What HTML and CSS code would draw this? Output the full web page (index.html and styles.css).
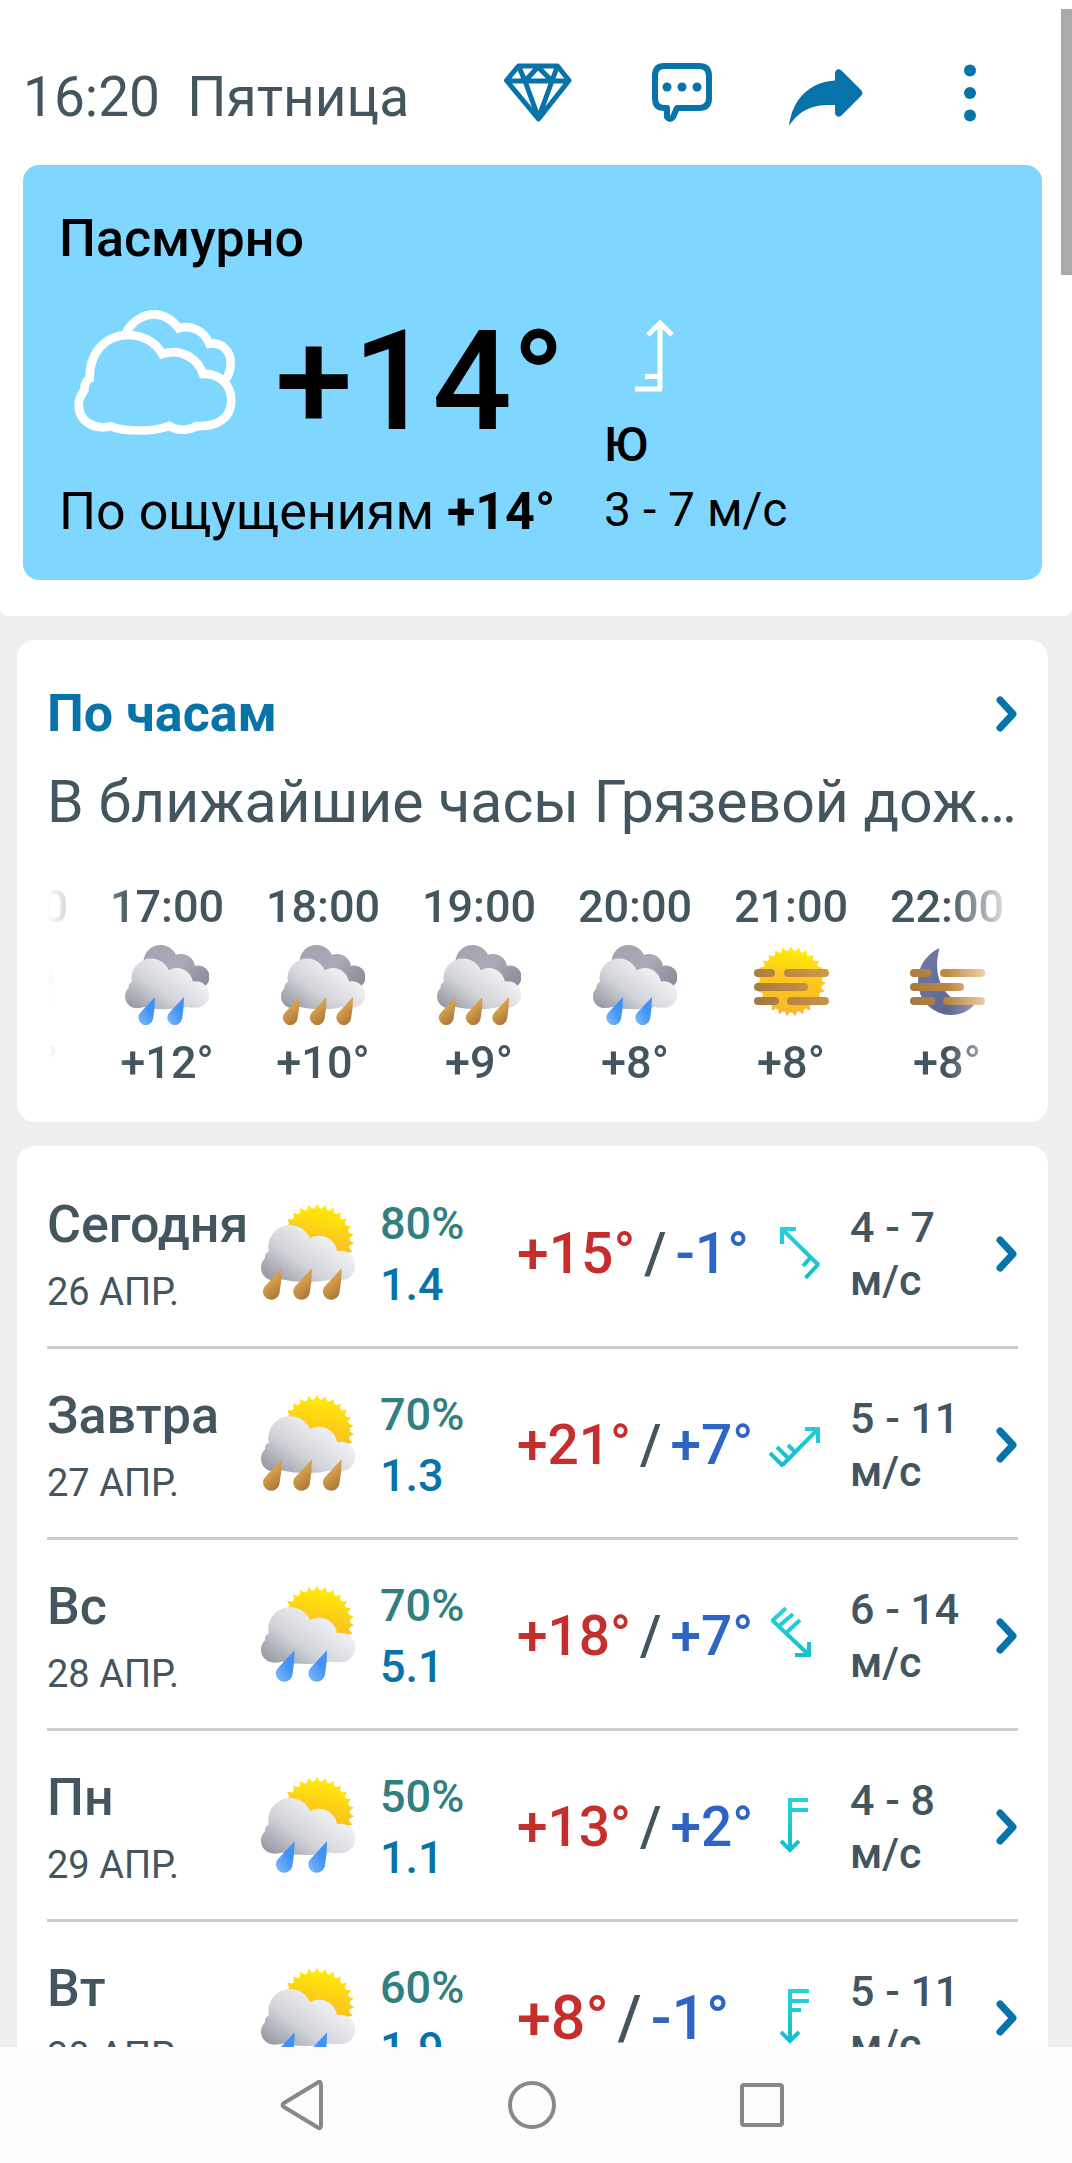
FILE: index.html
```html
<!DOCTYPE html>
<html lang="ru">
<head>
<meta charset="utf-8">
<meta name="viewport" content="width=device-width, initial-scale=1">
<title>Прогноз погоды</title>
<link rel="stylesheet" href="styles.css">
</head>
<body>
<svg class="sprite" aria-hidden="true">
  <defs>
    <linearGradient id="g-back" gradientUnits="userSpaceOnUse" x1="30" y1="0" x2="75" y2="45"><stop offset="0" stop-color="#a3a4b0"/><stop offset=".5" stop-color="#a9aab6"/><stop offset="1" stop-color="#8b8c99"/></linearGradient>
    <linearGradient id="g-front" gradientUnits="userSpaceOnUse" x1="50" y1="22" x2="16" y2="68"><stop offset="0" stop-color="#eceef1"/><stop offset=".5" stop-color="#d2d4da"/><stop offset="1" stop-color="#989aa5"/></linearGradient>
    <linearGradient id="g-drop" x1="1" y1="0" x2="0" y2="1"><stop offset=".4" stop-color="#3f93f8"/><stop offset="1" stop-color="#86baf8"/></linearGradient>
    <linearGradient id="g-mud" x1="0" y1="0" x2=".5" y2="1"><stop offset=".5" stop-color="#d69f4c"/><stop offset="1" stop-color="#ad7b3b"/></linearGradient>
    <linearGradient id="g-sun" x1=".6" y1="0" x2=".4" y2="1"><stop offset="0" stop-color="#ffee00"/><stop offset=".5" stop-color="#fcc51f"/><stop offset="1" stop-color="#f9b62e"/></linearGradient>
    <linearGradient id="g-fog" gradientUnits="userSpaceOnUse" x1="0" y1="60" x2="75" y2="20"><stop offset="0" stop-color="#a2763f"/><stop offset="1" stop-color="#d29b49"/></linearGradient>
    <linearGradient id="g-moon" x1="0" y1="0" x2="1" y2="1"><stop offset="0" stop-color="#717cab"/><stop offset="1" stop-color="#555f88"/></linearGradient>
    <linearGradient id="g-wind" gradientUnits="userSpaceOnUse" x1="0" y1="0" x2="0" y2="56"><stop offset="0" stop-color="#25d3dc"/><stop offset="1" stop-color="#14bccb"/></linearGradient>
    <clipPath id="sun-shape">
      <circle r="31"/>
      <polygon points="0,-35 30.3,17.5 -30.3,17.5"/>
      <polygon points="0,-35 30.3,17.5 -30.3,17.5" transform="rotate(13.33)"/>
      <polygon points="0,-35 30.3,17.5 -30.3,17.5" transform="rotate(26.67)"/>
      <polygon points="0,-35 30.3,17.5 -30.3,17.5" transform="rotate(40)"/>
      <polygon points="0,-35 30.3,17.5 -30.3,17.5" transform="rotate(53.33)"/>
      <polygon points="0,-35 30.3,17.5 -30.3,17.5" transform="rotate(66.67)"/>
      <polygon points="0,-35 30.3,17.5 -30.3,17.5" transform="rotate(80)"/>
      <polygon points="0,-35 30.3,17.5 -30.3,17.5" transform="rotate(93.33)"/>
      <polygon points="0,-35 30.3,17.5 -30.3,17.5" transform="rotate(106.67)"/>
    </clipPath>
    <g id="sun"><rect x="-35" y="-35" width="70" height="70" fill="url(#g-sun)" clip-path="url(#sun-shape)"/></g>
    <g id="cloud-back" fill="url(#g-back)"><circle cx="35.500" cy="17" r="17"/><circle cx="56" cy="23" r="14"/><circle cx="73" cy="32" r="11.500"/><circle cx="62" cy="31" r="10"/></g>
    <g id="cloud-front" fill="url(#g-front)"><circle cx="26" cy="33" r="19.500"/><circle cx="52" cy="39" r="16"/><circle cx="71" cy="49.500" r="13.200"/><circle cx="11.500" cy="51.500" r="11.500"/><circle cx="9" cy="42" r="5.500"/><path d="M11 40h60v22c-4 1-6 1-9 0-12 3-30 3-43 0-3 1-6 1-8 1z"/></g>
    <path id="drop" d="M9 0 L-6 16 A7.400 7.400 0 1 0 7 22 Q9 12 9 0Z"/>
    <g id="rain" fill="url(#g-drop)"><use href="#drop" x="21" y="52"/><use href="#drop" x="50" y="52"/></g>
    <g id="mud" fill="url(#g-mud)"><use href="#drop" x="9.500" y="52"/><use href="#drop" x="36.500" y="52"/><use href="#drop" x="63" y="52"/></g>
    <g id="fog" fill="url(#g-fog)"><rect y="22" width="21" height="8" rx="4"/><rect x="30" y="22" width="45" height="8" rx="4"/><rect y="36" width="54" height="8" rx="4"/><rect y="50" width="25" height="8" rx="4"/><rect x="33" y="50" width="42" height="8" rx="4"/></g>
    <symbol id="i-rain" viewBox="0 0 84 80"><use href="#cloud-back"/><use href="#cloud-front"/><use href="#rain"/></symbol>
    <symbol id="i-mud" viewBox="0 0 84 80"><use href="#cloud-back"/><use href="#cloud-front"/><use href="#mud"/></symbol>
    <symbol id="i-sunfog" viewBox="0 0 84 80"><g transform="translate(5 2)"><use href="#sun" x="37" y="34.500"/><use href="#fog"/></g></symbol>
    <symbol id="i-moonfog" viewBox="0 0 84 80"><g transform="translate(5 2)"><path fill="url(#g-moon)" d="M29.500 1C15 8 8 20 8 35A33 33 0 0 0 41 68C51 68 59 64 65 57C40 60 20 35 29.500 1Z"/><use href="#fog"/></g></symbol>
    <symbol id="i-sunmud" viewBox="0 0 95 96"><use href="#sun" transform="translate(56 37) scale(1.060)"/><g transform="translate(0 6) scale(1.120)"><use href="#cloud-front"/><use href="#mud"/></g></symbol>
    <symbol id="i-sunrain" viewBox="0 0 95 96"><use href="#sun" transform="translate(56 37) scale(1.060)"/><g transform="translate(0 6) scale(1.120)"><use href="#cloud-front"/><use href="#rain"/></g></symbol>
    <symbol id="i-chevron" viewBox="0 0 22 36"><path d="M4 4 L17 18 L4 32" fill="none" stroke="#0873a9" stroke-width="7" stroke-linecap="round" stroke-linejoin="round"/></symbol>
  </defs>
</svg>

<main class="screen">
  <section class="top">
    <header class="header">
      <h1 class="header-title">16:20&nbsp; Пятница</h1>
      <button class="icon-button" type="button" aria-label="Премиум">
        <svg viewBox="0 0 72 70" fill="none" stroke="#0873a9" stroke-width="5" stroke-linejoin="round"><path d="M16.500 8H55.500L67 22.500L36.500 61L4.500 22.500ZM4.500 23H67M16.500 8L23 23L36.500 60L50 23L55.500 8M23 23L36 9L50 23"/></svg>
      </button>
      <button class="icon-button" type="button" aria-label="Отзыв">
        <svg viewBox="0 0 72 70" fill="none" stroke="#0873a9" stroke-width="6" stroke-linejoin="round"><path d="M18 8H53Q63 8 63 18V40Q63 50 53 50H31L27 59Q24 63 21 59L21 50H18Q9 50 9 40V18Q9 8 18 8Z"/><g fill="#0873a9" stroke="none"><circle cx="21" cy="29" r="4.500"/><circle cx="36" cy="29" r="4.500"/><circle cx="51" cy="29" r="4.500"/></g></svg>
      </button>
      <button class="icon-button" type="button" aria-label="Поделиться">
        <svg viewBox="1 0 72 70"><path fill="#0873a9" d="M0 68C3 42 20 24 46 22.500V16C46 11 50 10 53 13L72 32Q75 35 72 38L53 57C50 60 46 59 46 54V47C25 46 11 51 0 68Z"/></svg>
      </button>
      <button class="icon-button" type="button" aria-label="Меню">
        <svg viewBox="0 0 72 70" fill="#0873a9"><circle cx="36" cy="12.500" r="6"/><circle cx="36" cy="35" r="6"/><circle cx="36" cy="57.500" r="6"/></svg>
      </button>
    </header>

    <article class="now">
      <h2 class="now-title">Пасмурно</h2>
      <div class="now-body">
        <div class="now-temp">
          <div class="now-main">
            <svg class="now-cloud" viewBox="60 50 510 400" fill="none" stroke="#fff" stroke-width="26" aria-hidden="true">
              <path d="M228 130C248 92 285 74 315 75C345 77 368 92 386 117C425 105 462 125 478 163C515 158 542 185 542 220C542 240 536 258 528 268"/>
              <path d="M119 268C118 190 165 137 235 137C280 137 318 160 337 194C395 175 445 210 459 254C510 250 544 290 544 333C544 385 505 413 440 410C415 425 380 425 357 410C310 428 225 428 182 411C135 422 86 400 86 345C86 325 95 315 103 302C103 285 110 273 119 268Z"/>
            </svg>
            <span class="now-degrees">+14°</span>
          </div>
          <p class="now-feels">По ощущениям <b>+14°</b></p>
        </div>
        <div class="now-wind">
          <svg class="now-arrow" viewBox="0 0 40 72" fill="none" stroke="#fff" stroke-width="5" aria-hidden="true"><path d="M26 3V69M14 15L26 3L38 15M1 69H28M11 56.500H26"/></svg>
          <p class="now-direction">Ю</p>
          <p class="now-speed">3 - 7 м/с</p>
        </div>
      </div>
    </article>
  </section>

  <section class="card hourly">
    <a class="hourly-head" href="#hourly"><h2 class="hourly-title">По часам</h2><svg class="chevron" aria-hidden="true"><use href="#i-chevron"/></svg></a>
    <p class="hourly-text">В ближайшие часы Грязевой дож…</p>
    <div class="hours">
      <ul class="hours-track">
        <li class="hour"><span>16:00</span><svg aria-hidden="true"><use href="#i-rain"/></svg><span>+14°</span></li>
        <li class="hour"><span>17:00</span><svg aria-hidden="true"><use href="#i-rain"/></svg><span>+12°</span></li>
        <li class="hour"><span>18:00</span><svg aria-hidden="true"><use href="#i-mud"/></svg><span>+10°</span></li>
        <li class="hour"><span>19:00</span><svg aria-hidden="true"><use href="#i-mud"/></svg><span>+9°</span></li>
        <li class="hour"><span>20:00</span><svg aria-hidden="true"><use href="#i-rain"/></svg><span>+8°</span></li>
        <li class="hour"><span>21:00</span><svg aria-hidden="true"><use href="#i-sunfog"/></svg><span>+8°</span></li>
        <li class="hour"><span>22:00</span><svg aria-hidden="true"><use href="#i-moonfog"/></svg><span>+8°</span></li>
      </ul>
    </div>
  </section>

  <section class="card daily">
    <a class="day" href="#d26">
      <div><div class="day-name">Сегодня</div><div class="day-date">26 АПР.</div></div>
      <svg class="day-icon" aria-hidden="true"><use href="#i-sunmud"/></svg>
      <div class="rain"><div class="rain-chance">80%</div><div class="rain-amount">1.4</div></div>
      <div class="temps temps-mid"><span class="max">+15°</span><span>/</span><span class="min">-1°</span></div>
      <svg class="wind-icon" viewBox="0 0 52 56" aria-hidden="true"><path d="M14 4L50.500 40M14 19V4H28M50.500 39L37.500 53M43 32L35 41"/></svg>
      <div class="wind">4 - 7<br>м/с</div>
      <svg class="chevron" aria-hidden="true"><use href="#i-chevron"/></svg>
    </a>
    <a class="day" href="#d27">
      <div><div class="day-name">Завтра</div><div class="day-date">27 АПР.</div></div>
      <svg class="day-icon" aria-hidden="true"><use href="#i-sunmud"/></svg>
      <div class="rain"><div class="rain-chance">70%</div><div class="rain-amount">1.3</div></div>
      <div class="temps"><span class="max">+21°</span><span>/</span><span class="min">+7°</span></div>
      <svg class="wind-icon" viewBox="0 0 52 56" aria-hidden="true"><path d="M50 13L14.500 49M37 13H50V27M15 50L2 37M21 43L9 31M28 37L20 29"/></svg>
      <div class="wind">5 - 11<br>м/с</div>
      <svg class="chevron" aria-hidden="true"><use href="#i-chevron"/></svg>
    </a>
    <a class="day" href="#d28">
      <div><div class="day-name">Вс</div><div class="day-date">28 АПР.</div></div>
      <svg class="day-icon" aria-hidden="true"><use href="#i-sunrain"/></svg>
      <div class="rain"><div class="rain-chance">70%</div><div class="rain-amount">5.1</div></div>
      <div class="temps"><span class="max">+18°</span><span>/</span><span class="min">+7°</span></div>
      <svg class="wind-icon" viewBox="0 0 52 56" aria-hidden="true"><path d="M4 13L41 48M27 48H41V35M4 14L18 1M11 19L25 7M18 26L32 13"/></svg>
      <div class="wind">6 - 14<br>м/с</div>
      <svg class="chevron" aria-hidden="true"><use href="#i-chevron"/></svg>
    </a>
    <a class="day" href="#d29">
      <div><div class="day-name">Пн</div><div class="day-date">29 АПР.</div></div>
      <svg class="day-icon" aria-hidden="true"><use href="#i-sunrain"/></svg>
      <div class="rain"><div class="rain-chance">50%</div><div class="rain-amount">1.1</div></div>
      <div class="temps"><span class="max">+13°</span><span>/</span><span class="min">+2°</span></div>
      <svg class="wind-icon" viewBox="0 0 52 56" aria-hidden="true"><path d="M22 52V2H40M22 12H40M13 43L22 52L31 43"/></svg>
      <div class="wind">4 - 8<br>м/с</div>
      <svg class="chevron" aria-hidden="true"><use href="#i-chevron"/></svg>
    </a>
    <a class="day" href="#d30">
      <div><div class="day-name">Вт</div><div class="day-date">30 АПР.</div></div>
      <svg class="day-icon" aria-hidden="true"><use href="#i-sunrain"/></svg>
      <div class="rain"><div class="rain-chance">60%</div><div class="rain-amount">1.9</div></div>
      <div class="temps temps-big"><span class="max">+8°</span><span>/</span><span class="min">-1°</span></div>
      <svg class="wind-icon" viewBox="0 0 52 56" aria-hidden="true"><path d="M22 52V2H41M22 12H41M22 21H33M13 43L22 52L31 43"/></svg>
      <div class="wind">5 - 11<br>м/с</div>
      <svg class="chevron" aria-hidden="true"><use href="#i-chevron"/></svg>
    </a>
  </section>
  <div class="scroll-thumb"></div>
</main>

<nav class="system-nav" aria-label="Система">
  <button class="icon-button" type="button" aria-label="Назад"><svg viewBox="0 0 72 70"><path d="M51 13Q55 10 55 15V55Q55 60 51 57L18 37Q15 35 18 33Z"/></svg></button>
  <button class="icon-button" type="button" aria-label="Домой"><svg viewBox="0 0 72 70"><circle cx="36" cy="35" r="22"/></svg></button>
  <button class="icon-button" type="button" aria-label="Недавние"><svg viewBox="0 0 72 70"><rect x="16" y="15" width="40" height="40" rx="2"/></svg></button>
</nav>
</body>
</html>
```
FILE: styles.css
```css
* {
  box-sizing: border-box;
}

body {
  display: flex;
  flex-direction: column;
  height: 100vh;
  margin: 0;
  background: #eeeff1;
  color: #43555f;
  font-family: Roboto, sans-serif;
}

h1, h2, p, ul {
  margin: 0;
  padding: 0;
}

a {
  color: inherit;
  text-decoration: none;
}

svg {
  display: block;
}

.sprite {
  position: absolute;
  width: 0;
  height: 0;
}

.screen {
  position: relative;
  flex: 1;
  min-height: 0;
  overflow: hidden;
}

.scroll-thumb {
  position: absolute;
  top: 9px;
  right: 0;
  width: 11px;
  height: 266px;
  background: #aaa;
}

.top {
  padding: 54px 30px 36px 23px;
  border-radius: 0 0 8px 8px;
  background: #fff;
}

.header {
  display: flex;
  align-items: center;
  gap: 72px;
  padding: 0 36px 33px 0;
}

.header-title {
  flex: 1;
  padding-top: 8px;
  font-size: 55px;
  font-weight: 400;
  line-height: 70px;
  white-space: nowrap;
}

.icon-button {
  flex: none;
  width: 72px;
  height: 70px;
  padding: 0;
  border: 0;
  background: none;
}

.icon-button svg {
  width: 100%;
  height: 100%;
  overflow: visible;
}

.now {
  padding: 43px 36px 38px;
  border-radius: 16px;
  background: #7fd7ff;
  color: #000;
}

.now-title {
  font-size: 52px;
  font-weight: 500;
  line-height: 62px;
}

.now-body {
  display: grid;
  grid-template-columns: 545px 1fr;
  align-items: end;
  padding-top: 26px;
}

.now-main {
  display: flex;
  align-items: flex-start;
}

.now-cloud {
  width: 170px;
  margin: 10px 35px 0 11px;
}

.now-degrees {
  font-size: 140px;
  font-weight: 500;
  line-height: 170px;
}

.now-feels {
  padding-top: 16px;
  font-size: 52px;
  line-height: 60px;
}

.now-feels b {
  font-weight: 700;
}

.now-arrow {
  width: 40px;
  height: 72px;
  margin: 0 0 25px 30px;
}

.now-direction {
  font-size: 48px;
  font-weight: 500;
  line-height: 56px;
}

.now-speed {
  padding-top: 5px;
  font-size: 48px;
  line-height: 64px;
}

.card {
  margin: 24px 24px 0 17px;
  border-radius: 18px;
  background: #fff;
}

.hourly {
  padding: 43px 30px 33px;
}

.hourly-head {
  display: flex;
  align-items: center;
  justify-content: space-between;
}

.hourly-title {
  color: #0873a9;
  font-size: 52px;
  font-weight: 700;
  line-height: 62px;
}

.chevron {
  width: 22px;
  height: 36px;
}

.hourly-text {
  padding-top: 19px;
  overflow: hidden;
  font-size: 59px;
  line-height: 76px;
  text-overflow: ellipsis;
  white-space: nowrap;
}

.hours {
  margin-top: 41px;
  overflow: hidden;
  mask-image: linear-gradient(to right, transparent, #000 84px, #000 calc(100% - 70px), transparent);
}

.hours-track {
  display: flex;
  margin-left: -114px;
  list-style: none;
}

.hour {
  display: flex;
  flex: none;
  flex-direction: column;
  align-items: center;
  gap: 12px;
  width: 156px;
  font-size: 45px;
  font-weight: 500;
  line-height: 52px;
}

.hour svg {
  width: 84px;
  height: 80px;
}

.daily {
  padding: 12px 30px;
}

.day {
  display: grid;
  grid-template-columns: 214px 119px 137px 251px 82px 1fr 22px;
  align-items: center;
  height: 191px;
  padding-top: 3px;
  border-bottom: 3px solid #ccc;
}

.day-name {
  font-size: 52px;
  font-weight: 500;
  line-height: 60px;
}

.day-date {
  padding-top: 17px;
  font-size: 38px;
  line-height: 40px;
}

.day-icon {
  width: 95px;
  height: 96px;
  margin-bottom: 4px;
}

.rain {
  font-size: 45px;
  font-weight: 500;
  line-height: 61px;
}

.rain-chance {
  color: #317f7f;
}

.rain-amount {
  color: #0873a9;
}

.temps {
  display: flex;
  gap: 9px;
  font-size: 55px;
  font-weight: 500;
  white-space: nowrap;
}

.temps-mid {
  font-size: 57px;
}

.temps-big {
  font-size: 61px;
}

.max {
  color: #c62e2d;
}

.min {
  color: #2e65c4;
}

.wind-icon {
  width: 52px;
  height: 56px;
  margin-bottom: 2px;
  fill: none;
  stroke: url(#g-wind);
  stroke-width: 4;
}

.wind {
  font-size: 43px;
  font-weight: 500;
  line-height: 53px;
}

.system-nav {
  display: flex;
  flex: none;
  align-items: center;
  justify-content: center;
  gap: 158px;
  height: 116px;
  padding-right: 8px;
  background: #fcfcfc;
}

.system-nav svg {
  fill: none;
  stroke: #888;
  stroke-width: 4;
}
```
